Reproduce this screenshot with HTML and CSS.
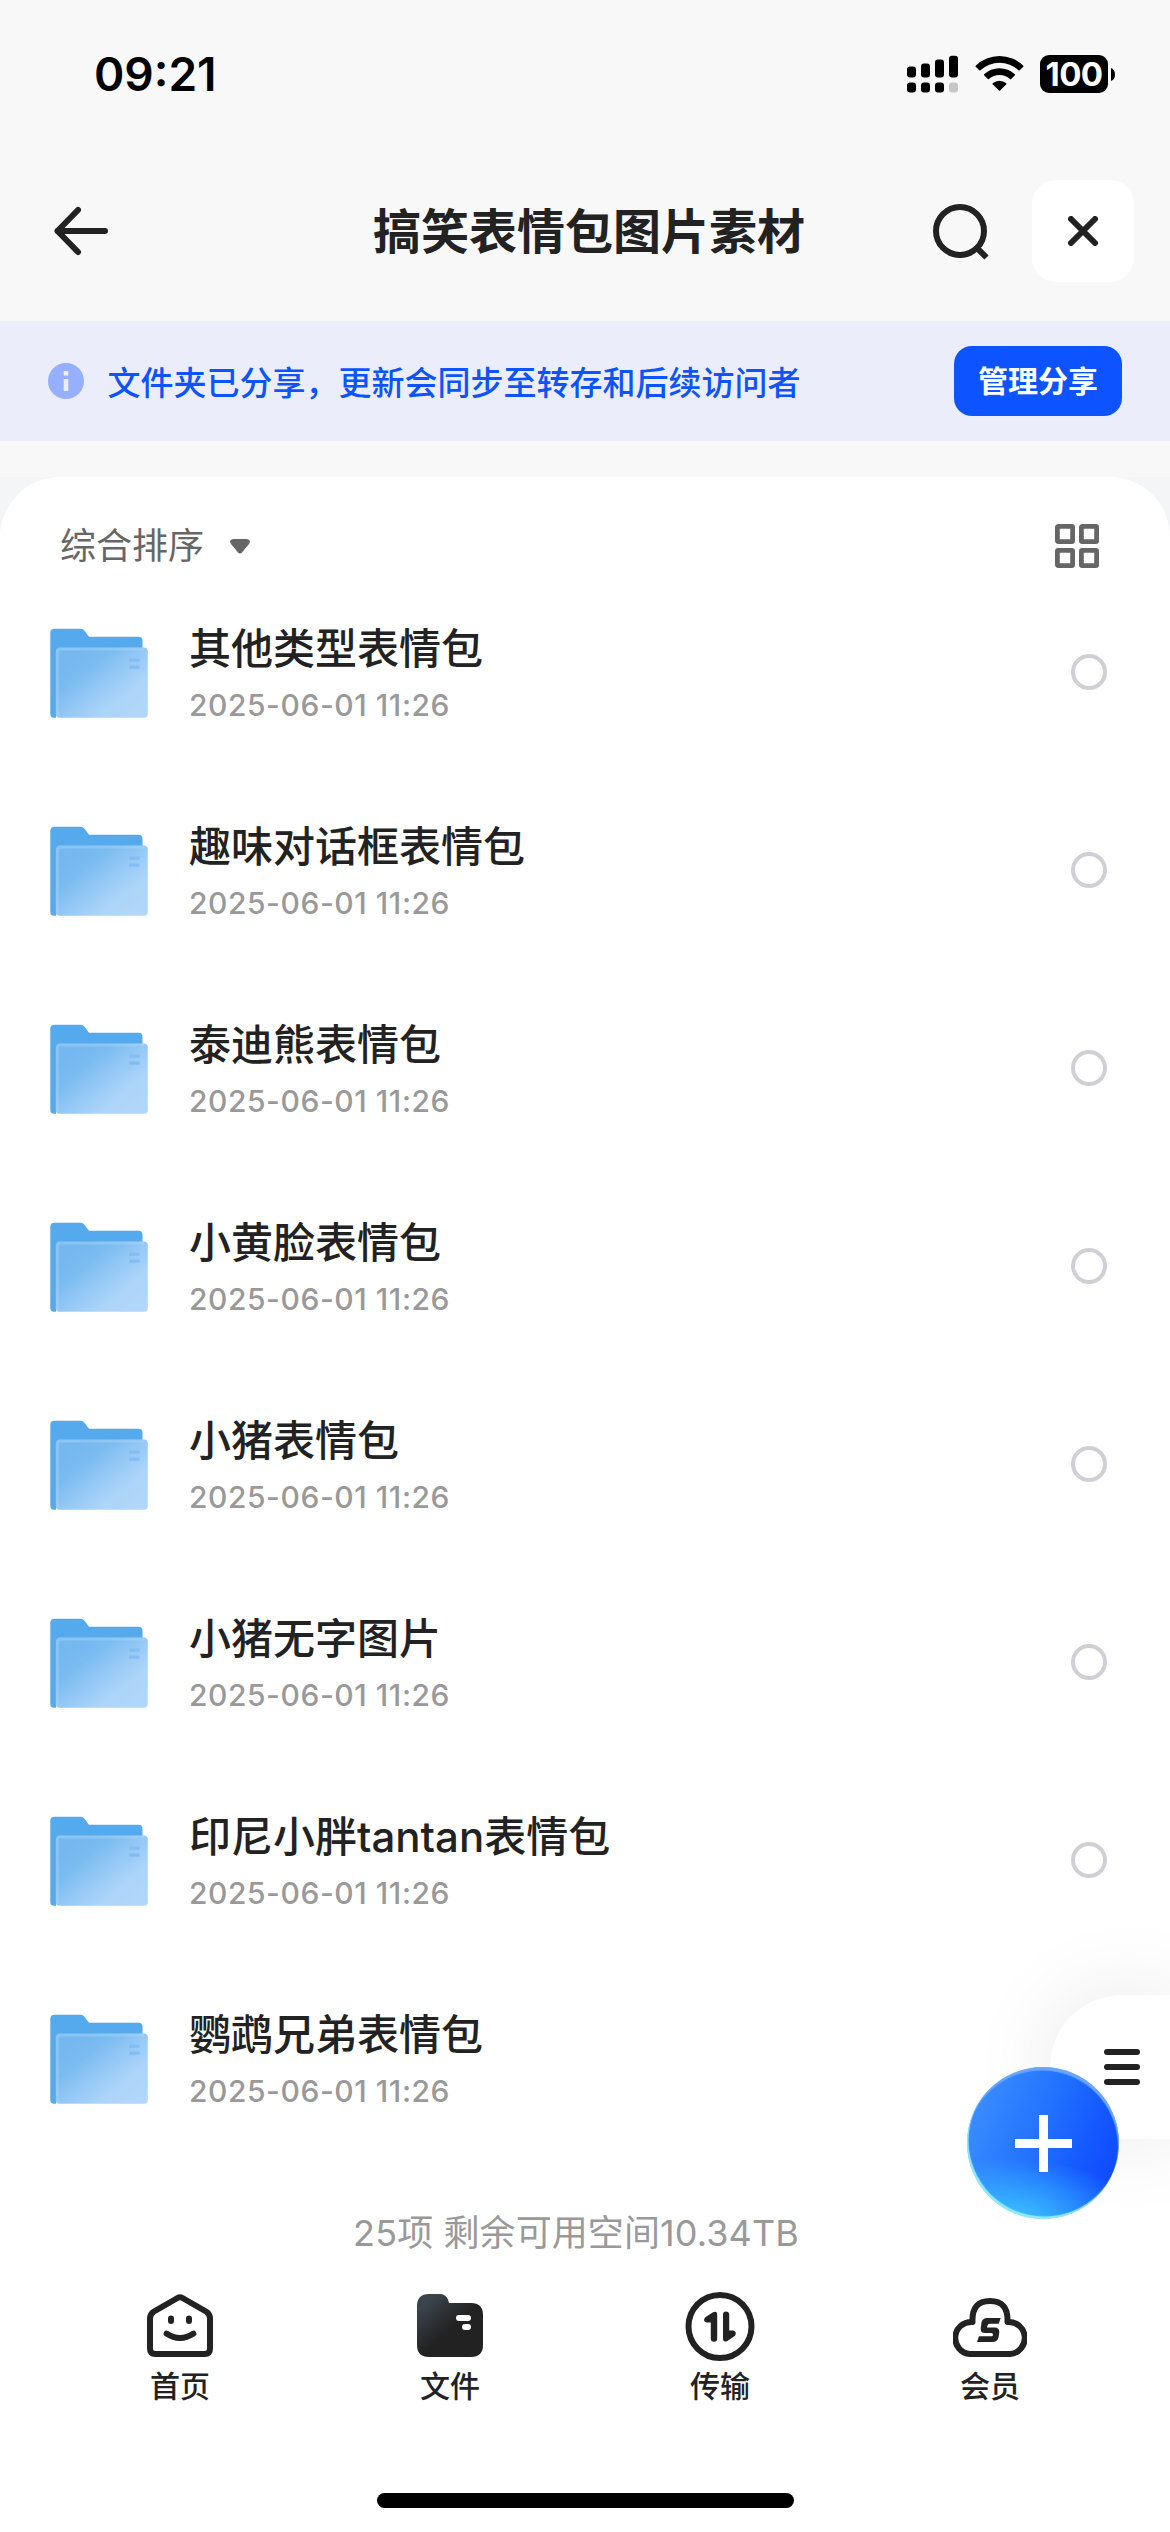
FILE: index.html
```html
<!DOCTYPE html>
<html lang="zh-CN">
<head>
<meta charset="utf-8">
<title>搞笑表情包图片素材</title>
<link rel="stylesheet" href="styles.css">
</head>
<body>
<svg class="defs" width="0" height="0" aria-hidden="true">
  <defs>
    <linearGradient id="folderFront" x1="0.1" y1="0.2" x2="0.85" y2="0.9">
      <stop offset="0" stop-color="#74b8ef"/>
      <stop offset="0.25" stop-color="#7bbcf0"/>
      <stop offset="0.5" stop-color="#94c8f5"/>
      <stop offset="0.8" stop-color="#add5f9"/>
      <stop offset="1" stop-color="#b0d6f9"/>
    </linearGradient>
    <linearGradient id="tabFolder" x1="0.1" y1="0.1" x2="0.55" y2="0.6">
      <stop offset="0.1" stop-color="#3b434c"/>
      <stop offset="0.9" stop-color="#222"/>
    </linearGradient>
    <symbol id="folder" viewBox="0 0 98 90">
      <path d="M4.500 0.700H30.500Q33 0.700 34.500 2.800L39 8.700H88.500Q92.500 8.700 92.500 12.700V80H6V89.700H4Q0.300 89.700 0.300 86V5Q0.300 0.700 4.500 0.700Z" fill="#55aaee"/>
      <rect x="5.800" y="19.500" width="92" height="70.200" rx="4" fill="url(#folderFront)"/>
      <path d="M7.300 88V24Q7.300 21 10.500 21H94" fill="none" stroke="#b5dafa" stroke-opacity="0.35" stroke-width="3"/>
      <rect x="79" y="30.500" width="10.600" height="3.200" fill="#83bdf3"/>
      <rect x="79" y="37.500" width="10.600" height="3.200" fill="#83bdf3"/>
    </symbol>
  </defs>
</svg>

<div class="screen">
  <div class="statusbar">
    <span class="time">09:21</span>
    <div class="indicators">
      <svg class="signal" width="51" height="38" viewBox="0 0 51 38">
        <rect x="0" y="11.500" width="9" height="11" rx="3"/>
        <rect x="14" y="8.500" width="9" height="14" rx="3"/>
        <rect x="28" y="4.500" width="9" height="18" rx="3"/>
        <rect x="42" y="0.700" width="9" height="21.800" rx="3"/>
        <rect x="0" y="27.500" width="9" height="10" rx="3"/>
        <rect x="14" y="27.500" width="9" height="10" rx="3"/>
        <rect x="28" y="27.500" width="9" height="10" rx="3"/>
        <rect x="42" y="27.500" width="9" height="10" rx="3" fill="#c6c6c6"/>
      </svg>
      <svg class="wifi" width="49" height="36" viewBox="0 0 49 36">
        <path d="M0.700 10.800A34 34 0 0 1 48.300 10.800Q48.700 11.300 48.300 11.700L44.700 15.300Q44.100 15.800 43.500 15.300A28 28 0 0 0 5.500 15.300Q4.900 15.800 4.300 15.300L0.700 11.700Q0.300 11.300 0.700 10.800Z"/>
        <path d="M9.100 19.300A22.500 22.500 0 0 1 39.900 19.300Q40.300 19.700 39.900 20.200L36.200 23.900Q35.700 24.400 35.100 23.900A16 16 0 0 0 13.900 23.900Q13.300 24.400 12.800 23.900L9.100 20.200Q8.700 19.700 9.100 19.300Z"/>
        <path d="M17.700 28.200A10.500 10.500 0 0 1 31.300 28.200Q31.700 28.700 31.300 29.200L25.100 35.400Q24.500 35.900 23.900 35.400L17.700 29.200Q17.300 28.700 17.700 28.200Z"/>
      </svg>
      <div class="battery"><span class="level">100</span></div>
      <svg class="nub" width="4" height="13" viewBox="0 0 4 13"><path d="M0 0Q4 1.500 4 6.500T0 13Z"/></svg>
    </div>
  </div>

  <header class="navbar">
    <svg class="back" width="54" height="54" viewBox="0 0 54 54" fill="none" stroke="#222" stroke-width="6" stroke-linecap="round" stroke-linejoin="round"><path d="M24 6L3.500 27L24 48M3.500 27H51"/></svg>
    <h1 class="title">搞笑表情包图片素材</h1>
    <svg class="search" width="60" height="60" viewBox="0 0 60 60" fill="none" stroke="#222" stroke-width="6"><circle cx="28" cy="28" r="24"/><path d="M45 45L54.500 54.500"/></svg>
    <div class="close"><svg width="30" height="30" viewBox="0 0 30 30" fill="none" stroke="#222" stroke-width="6" stroke-linecap="round"><path d="M3 3L27 27M27 3L3 27"/></svg></div>
  </header>

  <div class="banner">
    <svg class="info" width="36" height="36" viewBox="0 0 36 36"><circle cx="18" cy="18" r="18" fill="#96afff"/><path d="M15.700 8H20.300V12.500H15.700ZM15.700 16H20.300V28H15.700Z" fill="#ebeefa"/></svg>
    <span class="notice">文件夹已分享，更新会同步至转存和后续访问者</span>
    <span class="manage">管理分享</span>
  </div>

  <div class="sheet-wrap">
  <main class="sheet">
    <div class="toolbar">
      <span class="sort">综合排序</span>
      <svg class="caret" width="20" height="15" viewBox="0 0 20 15"><path d="M3 0H17Q21.500 1 19 5L12.200 13.200Q10 15.600 7.800 13.200L1 5Q-1.500 1 3 0Z" fill="#666"/></svg>
      <svg class="gridicon" width="44" height="44" viewBox="0 0 44 44" fill="none" stroke="#666" stroke-width="4.800"><rect x="2.400" y="2.400" width="15.200" height="15.200" rx="0.800"/><rect x="26.400" y="2.400" width="15.200" height="15.200" rx="0.800"/><rect x="2.400" y="26.400" width="15.200" height="15.200" rx="0.800"/><rect x="26.400" y="26.400" width="15.200" height="15.200" rx="0.800"/></svg>
    </div>
    <ul class="list">
      <li class="row"><svg class="folder"><use href="#folder"/></svg><div class="meta"><div class="name">其他类型表情包</div><div class="date">2025-06-01 11:26</div></div><span class="radio"></span></li>
      <li class="row"><svg class="folder"><use href="#folder"/></svg><div class="meta"><div class="name">趣味对话框表情包</div><div class="date">2025-06-01 11:26</div></div><span class="radio"></span></li>
      <li class="row"><svg class="folder"><use href="#folder"/></svg><div class="meta"><div class="name">泰迪熊表情包</div><div class="date">2025-06-01 11:26</div></div><span class="radio"></span></li>
      <li class="row"><svg class="folder"><use href="#folder"/></svg><div class="meta"><div class="name">小黄脸表情包</div><div class="date">2025-06-01 11:26</div></div><span class="radio"></span></li>
      <li class="row"><svg class="folder"><use href="#folder"/></svg><div class="meta"><div class="name">小猪表情包</div><div class="date">2025-06-01 11:26</div></div><span class="radio"></span></li>
      <li class="row"><svg class="folder"><use href="#folder"/></svg><div class="meta"><div class="name">小猪无字图片</div><div class="date">2025-06-01 11:26</div></div><span class="radio"></span></li>
      <li class="row"><svg class="folder"><use href="#folder"/></svg><div class="meta"><div class="name">印尼小胖tantan表情包</div><div class="date">2025-06-01 11:26</div></div><span class="radio"></span></li>
      <li class="row"><svg class="folder"><use href="#folder"/></svg><div class="meta"><div class="name">鹦鹉兄弟表情包</div><div class="date">2025-06-01 11:26</div></div></li>
    </ul>
    <p class="summary">25项 剩余可用空间10.34TB</p>
  </main>
  </div>

  <nav class="tabs">
    <div class="tab">
      <svg width="72" height="72" viewBox="0 0 72 72" fill="none" stroke="#222" stroke-width="6" stroke-linecap="round" stroke-linejoin="round"><path d="M33.500 7L10 20.500Q6 23 6 27.500V57.500Q6 63 11.500 63H60.500Q66 63 66 57.500V27.500Q66 23 62 20.500L38.500 7Q36 5.500 33.500 7Z"/><path d="M22.500 42.500Q36 51.500 49.500 42.500" stroke-width="5.800"/><path d="M27 27.500V30M45 27.500V30" stroke-width="6"/></svg>
      <span>首页</span>
    </div>
    <div class="tab">
      <svg width="72" height="72" viewBox="0 0 72 72"><path d="M3 18Q3 6 15 6H26Q31.500 6 34 11.500L35 15H57Q69 15 69 27V57Q69 69 57 69H15Q3 69 3 57Z" transform="translate(0 -3)" fill="url(#tabFolder)"/><path d="M45 27H54M51 36H54" stroke="#fff" stroke-width="6" stroke-linecap="round"/></svg>
      <span>文件</span>
    </div>
    <div class="tab">
      <svg width="72" height="72" viewBox="0 0 72 72"><circle cx="36" cy="35.500" r="31.500" fill="none" stroke="#222" stroke-width="6"/><path d="M21 26.500L29 21.200Q33.200 19.500 33.200 23.500V47.500Q33.200 50.700 30 50.700T26.800 47.500V31.600H22.500Q18.500 30 21 26.500ZM39 23.500Q39 20.500 42 20.500T45.200 23.500V39.500H49.500Q53.200 41 51 44.800L43 50.200Q39 51.500 39 47.500Z" fill="#222"/></svg>
      <span>传输</span>
    </div>
    <div class="tab">
      <svg width="74" height="72" viewBox="0 0 74 72"><path d="M17 63A15 15 0 0 1 19.500 31Q18.500 10 37 10T54.500 31A15 15 0 0 1 57 63Z" fill="none" stroke="#222" stroke-width="6" stroke-linejoin="round"/><path d="M34 27H47.700L45.700 32.700H36.500Q34.500 32.700 34.300 35.200L34 36.500H41.500Q46.500 36.500 46.300 41.500L45.500 46.500Q44.500 51 39 51H24L26 45.200H38.500Q40 45.200 40 43.700T38.300 42H32Q27.500 42 27.700 37.500L28.500 31.500Q29.500 27 34 27Z" fill="#222"/></svg>
      <span>会员</span>
    </div>
  </nav>
  <div class="bottom"><div class="homebar"></div></div>

  <div class="drawer"><i></i><i></i><i></i></div>
  <div class="fab"><svg width="57" height="57" viewBox="0 0 57 57"><path d="M24 0H33V24H57V33H33V57H24V33H0V24H24Z" fill="#fff"/></svg></div>
</div>
</body>
</html>
```
FILE: styles.css
```css
* { box-sizing: border-box; margin: 0; padding: 0; }

body {
  width: 1170px;
  height: 2532px;
  overflow: hidden;
  background: #f8f8f8;
  color: #222;
  font-family: Inter, "Noto Sans CJK SC", sans-serif;
}

svg { display: block; flex: none; }
.defs { position: absolute; }

.screen {
  position: relative;
  width: 1170px;
  height: 2532px;
  display: flex;
  flex-direction: column;
  overflow: hidden;
}

.statusbar {
  height: 150px;
  flex: none;
  display: flex;
  justify-content: space-between;
  padding: 0 55px 0 94px;
  color: #000;
}
.time { font-size: 46px; line-height: 56px; margin-top: 46px; font-weight: 600; }
.indicators { display: flex; align-items: flex-start; padding-top: 55px; }
.wifi { margin-left: 16.500px; }
.battery {
  width: 68px;
  height: 38px;
  margin-left: 16.500px;
  border-radius: 9px;
  background: #000;
  color: #fff;
  text-align: center;
}
.level { display: block; font-size: 33px; line-height: 38px; font-weight: 700; letter-spacing: -0.6px; }
.nub { margin: 13px 0 0 3px; }

.navbar {
  height: 171px;
  flex: none;
  display: flex;
  align-items: center;
  padding: 0 36px 9px 54px;
}
.title { flex: none; margin-left: 265px; padding-top: 2px; font-size: 48px; line-height: 66px; font-weight: 700; }
.search { margin-left: 127px; margin-top: 4px; }
.close {
  margin-left: auto;
  width: 102px;
  height: 102px;
  border-radius: 24px;
  background: #fff;
  display: flex;
  align-items: center;
  justify-content: center;
}

.banner {
  height: 120px;
  flex: none;
  display: flex;
  align-items: center;
  padding: 0 48px;
  background: #ebeefa;
}
.notice { margin-left: 23.500px; padding-top: 4px; font-size: 33px; line-height: 48px; font-weight: 500; color: #0d53ff; }
.manage {
  margin-left: auto;
  width: 168px;
  height: 70px;
  border-radius: 18px;
  background: #0d53ff;
  color: #fff;
  font-size: 30px;
  line-height: 71px;
  font-weight: 700;
  text-align: center;
}

.sheet-wrap { margin-top: 36px; flex: none; background: #f4f5f7; }
.sheet {
  height: 1797px;
  padding-top: 24px;
  background: #fff;
  border-radius: 60px 60px 0 0;
}
.toolbar { height: 90px; display: flex; align-items: center; padding: 0 71px 0 60px; }
.sort { font-size: 36px; line-height: 50px; color: #666; }
.caret { margin-left: 26px; }
.gridicon { margin-left: auto; }

.list { list-style: none; }
.row { height: 198px; display: flex; align-items: flex-start; padding: 37px 63px 0 50px; }
.folder { width: 98px; height: 90px; }
.meta { margin-left: 41px; }
.name { margin-top: -9px; font-size: 42px; line-height: 60px; font-weight: 500; }
.date {
  margin-top: 8px;
  font-size: 30px;
  line-height: 36px;
  letter-spacing: 0.56px;
  color: #999;
  font-weight: 500;
}
.radio {
  width: 36px;
  height: 36px;
  margin: 26px 0 0 auto;
  border: 4px solid #d0cfd5;
  border-radius: 50%;
}
.summary {
  margin-top: 33px;
  padding-right: 18px;
  text-align: center;
  font-size: 36px;
  line-height: 50px;
  letter-spacing: 0.1px;
  color: #999;
}

.tabs {
  height: 219px;
  flex: none;
  display: flex;
  padding: 17px 45px 0;
  background: #fff;
}
.tab {
  width: 270px;
  display: flex;
  flex-direction: column;
  align-items: center;
  font-size: 30px;
  line-height: 42px;
  font-weight: 500;
}
.tab span { margin-top: 2px; }

.bottom { flex: 1; background: #fff; }
.homebar { width: 417px; height: 15px; margin: 0 auto; border-radius: 8px; background: #000; }

.drawer {
  position: absolute;
  left: 1050px;
  top: 1995px;
  width: 130px;
  height: 144px;
  padding: 54px 0 0 54px;
  border-radius: 72px 0 0 72px;
  background: #fff;
  box-shadow: 0 0 90px rgba(0, 0, 0, 0.09);
  display: flex;
  flex-direction: column;
  gap: 9px;
}
.drawer i { width: 36px; height: 6px; border-radius: 3px; background: #222; }

.fab {
  position: absolute;
  left: 967px;
  top: 2067px;
  width: 152px;
  height: 152px;
  border-radius: 50%;
  display: flex;
  align-items: center;
  justify-content: center;
  background:
    radial-gradient(ellipse 90% 42% at 26% 102%, #40c8ff 0%, rgba(56, 184, 255, 0.8) 35%, rgba(40, 130, 255, 0) 100%),
    linear-gradient(112deg, #3a8bff 12%, #2373ff 45%, #1458ff 72%, #0f48ff 92%);
  box-shadow:
    inset 1.500px -2.500px 1px #8cecfb,
    inset -1px 3.500px 1px #69a6fb;
}
```
